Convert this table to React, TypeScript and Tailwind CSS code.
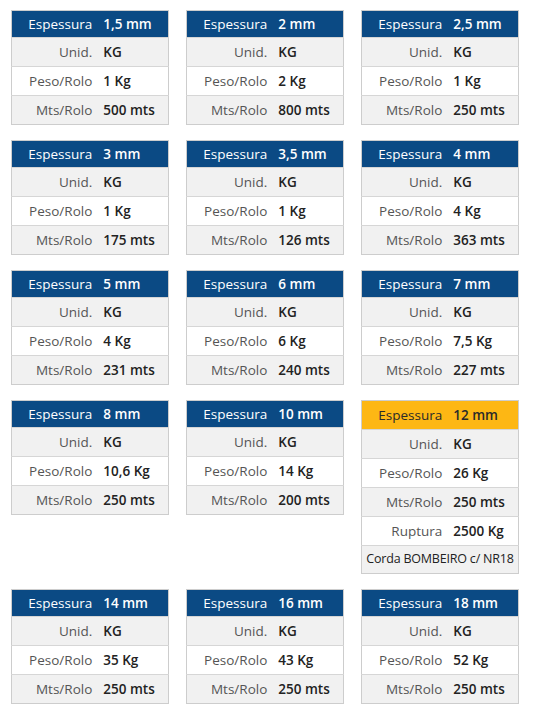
import React from "react";

type Spec = {
  size: string;
  peso: string;
  mts: string;
  ruptura?: string;
  note?: string;
  highlight?: boolean;
};

const specs: Spec[] = [
  { size: "1,5 mm", peso: "1 Kg", mts: "500 mts" },
  { size: "2 mm", peso: "2 Kg", mts: "800 mts" },
  { size: "2,5 mm", peso: "1 Kg", mts: "250 mts" },
  { size: "3 mm", peso: "1 Kg", mts: "175 mts" },
  { size: "3,5 mm", peso: "1 Kg", mts: "126 mts" },
  { size: "4 mm", peso: "4 Kg", mts: "363 mts" },
  { size: "5 mm", peso: "4 Kg", mts: "231 mts" },
  { size: "6 mm", peso: "6 Kg", mts: "240 mts" },
  { size: "7 mm", peso: "7,5 Kg", mts: "227 mts" },
  { size: "8 mm", peso: "10,6 Kg", mts: "250 mts" },
  { size: "10 mm", peso: "14 Kg", mts: "200 mts" },
  {
    size: "12 mm",
    peso: "26 Kg",
    mts: "250 mts",
    ruptura: "2500 Kg",
    note: "Corda BOMBEIRO c/ NR18",
    highlight: true,
  },
  { size: "14 mm", peso: "35 Kg", mts: "250 mts" },
  { size: "16 mm", peso: "43 Kg", mts: "250 mts" },
  { size: "18 mm", peso: "52 Kg", mts: "250 mts" },
];

function SpecTable({ spec }: { spec: Spec }) {
  const rows: [string, string][] = [
    ["Unid.", "KG"],
    ["Peso/Rolo", spec.peso],
    ["Mts/Rolo", spec.mts],
  ];
  if (spec.ruptura) rows.push(["Ruptura", spec.ruptura]);

  return (
    <table className="w-full border-collapse border border-[#cdcdcd] text-[13.5px]">
      <thead>
        <tr
          className={
            spec.highlight
              ? "h-[29px] bg-[#fdb714] text-[#2a2a2a]"
              : "h-[27px] bg-[#0b4a84] text-white"
          }
        >
          <th className="pr-[6px] text-right font-normal">Espessura</th>
          <th className="pl-[5px] text-left font-semibold">{spec.size}</th>
        </tr>
      </thead>
      <tbody>
        {rows.map(([label, value], i) => (
          <tr
            key={label}
            className={`h-[29px] border-t border-[#d6d6d6] ${
              i % 2 === 0 ? "bg-[#f1f1f1]" : "bg-white"
            }`}
          >
            <td className="pr-[6px] text-right text-[#555]">{label}</td>
            <td className="pl-[5px] text-left font-semibold text-[#222]">
              {value}
            </td>
          </tr>
        ))}
        {spec.note && (
          <tr className="h-[28px] border-t border-[#d6d6d6] bg-[#f1f1f1]">
            <td
              colSpan={2}
              className="whitespace-nowrap text-center text-[12.5px] tracking-[-0.2px] text-[#222]"
            >
              {spec.note}
            </td>
          </tr>
        )}
      </tbody>
    </table>
  );
}

export default function App() {
  return (
    <div
      className="min-h-[714px] w-[540px] bg-white pl-[11px] pt-[10px]"
      style={{ fontFamily: '"Open Sans", "Liberation Sans", sans-serif' }}
    >
      <div className="grid grid-cols-[158px_158px_158px] items-start gap-x-[17px] gap-y-[15px]">
        {specs.map((spec) => (
          <SpecTable key={spec.size} spec={spec} />
        ))}
      </div>
    </div>
  );
}
